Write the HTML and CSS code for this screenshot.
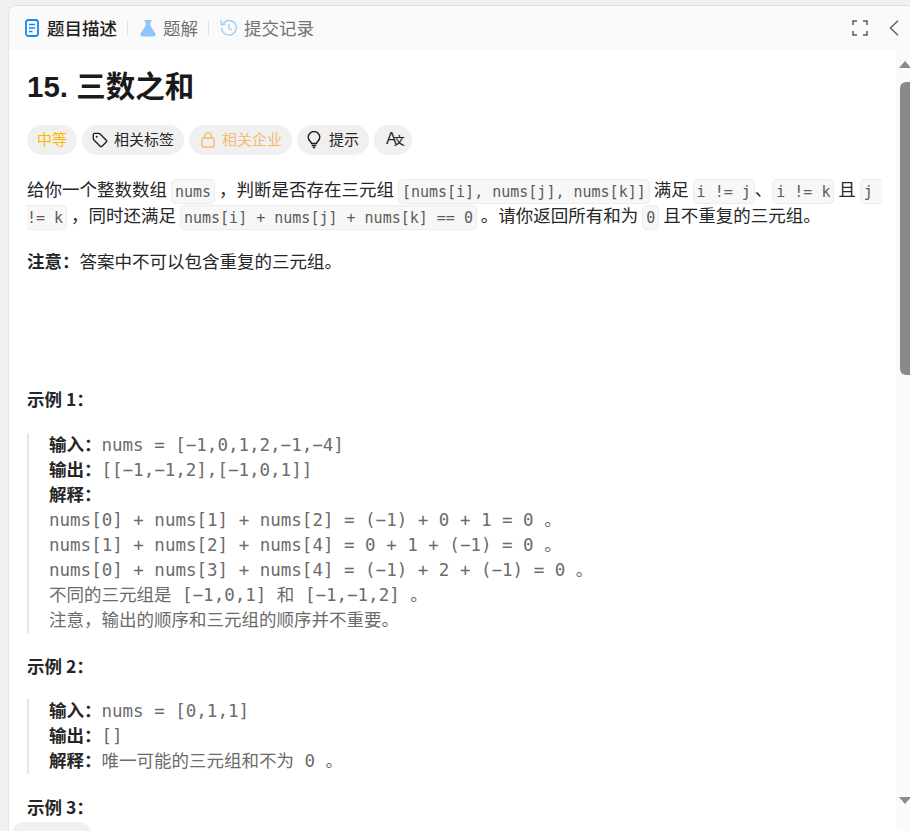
FILE: index.html
```html
<!DOCTYPE html>
<html lang="zh-CN">
<head>
<meta charset="utf-8">
<title>15. 三数之和</title>
<link rel="stylesheet" href="styles.css">
</head>
<body>
<div class="panel">
  <header class="tabs">
    <div class="tab active">
      <svg class="tab-icon" viewBox="0 0 14 18" width="14" height="18"><rect x="1" y="1" width="12" height="16" rx="2.5" fill="none" stroke="#1a86f5" stroke-width="1.8"/><path d="M4 5.500h6M4 9h6M4 12.500h3.500" stroke="#1a86f5" stroke-width="1.600" fill="none"/></svg>
      <span>题目描述</span>
    </div>
    <i class="sep"></i>
    <div class="tab">
      <svg class="tab-icon" viewBox="0 0 18 18" width="18" height="18"><path d="M5.500 1h7v1.400h-1v4.400l4.800 7.600c.8 1.300-.1 3-1.700 3H3.400c-1.600 0-2.500-1.700-1.700-3l4.800-7.600V2.400h-1z" fill="#8fc6fa"/></svg>
      <span>题解</span>
    </div>
    <i class="sep"></i>
    <div class="tab">
      <svg class="tab-icon" viewBox="0 0 18 18" width="18" height="18"><path d="M3 4.600A7.300 7.300 0 1 1 1.700 9" fill="none" stroke="#a6d0f8" stroke-width="1.500"/><path d="M.8 1.200l.6 4.600 4.400-.8" fill="none" stroke="#a6d0f8" stroke-width="1.500"/><path d="M9 5v4.600l3 1.600" fill="none" stroke="#a6d0f8" stroke-width="1.500"/></svg>
      <span>提交记录</span>
    </div>
    <div class="tab-actions">
      <svg viewBox="0 0 16 16" width="16" height="16"><path d="M1 5V1h4M11 1h4v4M15 11v4h-4M5 15H1v-4" fill="none" stroke="#5c5c5c" stroke-width="1.500"/></svg>
      <svg viewBox="0 0 10 16" width="10" height="16"><path d="M9 .8L1.400 8 9 15.200" fill="none" stroke="#5c5c5c" stroke-width="1.400"/></svg>
    </div>
  </header>
  <div class="body">
    <main class="content">
      <h1>15. 三数之和</h1>
      <div class="pills">
        <span class="pill medium">中等</span>
        <span class="pill"><svg viewBox="0 0 16 16" width="16" height="16"><path d="M1.300 2.600c0-.7.6-1.300 1.300-1.300h4.200c.4 0 .7.1 1 .4l6.500 6.500c.5.5.5 1.300 0 1.800l-4.300 4.300c-.5.5-1.300.5-1.800 0L1.700 7.800c-.3-.3-.4-.6-.4-1z" fill="none" stroke="#1a1a1a" stroke-width="1.300"/><circle cx="4.700" cy="4.700" r="1" fill="#1a1a1a"/></svg><span>相关标签</span></span>
        <span class="pill locked"><svg viewBox="0 0 14 16" width="14" height="16"><rect x="1" y="6" width="12" height="9" rx="2" fill="none" stroke="#f3bd6b" stroke-width="1.400"/><path d="M3.800 6V3.800a3.200 3.200 0 0 1 6.400 0V6" fill="none" stroke="#f3bd6b" stroke-width="1.400"/></svg><span>相关企业</span></span>
        <span class="pill hint"><svg viewBox="0 0 14 18" width="14" height="18"><path d="M4.600 12.500C4.400 10.800 1.200 9.500 1.200 6.300a5.800 5.800 0 0 1 11.600 0c0 3.200-3.200 4.500-3.400 6.200z" fill="none" stroke="#1a1a1a" stroke-width="1.400"/><path d="M4.800 14.500h4.400M5.800 16.500h2.400" stroke="#1a1a1a" stroke-width="1.500"/></svg><span>提示</span></span>
        <span class="pill ax"><span class="ax-a">A</span><span class="ax-x">文</span></span>
      </div>
      <p class="para">给你一个整数数组 <code>nums</code> ，判断是否存在三元组 <code>[nums[i], nums[j], nums[k]]</code> 满足 <code>i != j</code>、<code>i != k</code> 且 <code>j != k</code> ，同时还满足 <code>nums[i] + nums[j] + nums[k] == 0</code> 。请你返回所有和为 <code>0</code> 且不重复的三元组。</p>
      <p class="para note"><strong>注意：</strong>答案中不可以包含重复的三元组。</p>
      <p class="example-title first">示例 1：</p>
      <div class="example">
        <div><b>输入：</b>nums = [−1,0,1,2,−1,−4]</div>
        <div><b>输出：</b>[[−1,−1,2],[−1,0,1]]</div>
        <div><b>解释：</b></div>
        <div>nums[0] + nums[1] + nums[2] = (−1) + 0 + 1 = 0 。</div>
        <div>nums[1] + nums[2] + nums[4] = 0 + 1 + (−1) = 0 。</div>
        <div>nums[0] + nums[3] + nums[4] = (−1) + 2 + (−1) = 0 。</div>
        <div>不同的三元组是 [−1,0,1] 和 [−1,−1,2] 。</div>
        <div>注意，输出的顺序和三元组的顺序并不重要。</div>
      </div>
      <p class="example-title">示例 2：</p>
      <div class="example">
        <div><b>输入：</b>nums = [0,1,1]</div>
        <div><b>输出：</b>[]</div>
        <div><b>解释：</b>唯一可能的三元组和不为 0 。</div>
      </div>
      <p class="example-title">示例 3：</p>
    </main>
    <aside class="scrollbar">
      <i class="arrow up"></i>
      <i class="thumb"></i>
      <i class="arrow down"></i>
    </aside>
  </div>
  <div class="float-bar"></div>
</div>
</body>
</html>
```
FILE: styles.css
```css
html, body {
  margin: 0;
  height: 100%;
  overflow: hidden;
}
body {
  background: #f0f0f0;
  font-family: "Noto Sans CJK SC", "Noto Sans", sans-serif;
  color: #262626;
  padding: 5px 0 0 8px;
  box-sizing: border-box;
}
.panel {
  position: relative;
  height: 826px;
  width: 910px;
  background: #fff;
  border-top: 1px solid #dedede;
  border-left: 1px solid #e4e4e4;
  border-radius: 9px 0 0 0;
  display: flex;
  flex-direction: column;
  overflow: hidden;
}
.tabs {
  flex: none;
  height: 44px;
  background: #fafafa;
  display: flex;
  align-items: center;
  padding-left: 16px;
  width: 901px;
  box-sizing: border-box;
}
.tab {
  display: flex;
  align-items: center;
  gap: 6px;
  font-size: 17.5px;
  line-height: 24px;
  color: #737373;
}
.tab.active {
  color: #1f1f1f;
  font-weight: 500;
  gap: 8px;
}
.tab-icon { flex: none; }
.sep {
  width: 1px;
  height: 16px;
  background: #e2e2e2;
  margin: 0 11px 0 10px;
}
.tab-actions {
  margin-left: auto;
  margin-right: 11px;
  display: flex;
  align-items: center;
  gap: 21px;
}
.body {
  flex: 1;
  min-height: 0;
  display: flex;
  width: 901px;
}
.content {
  width: 887px;
  box-sizing: border-box;
  padding: 0 13px 0 18px;
  flex: none;
  overflow: hidden;
}
h1 {
  margin: 15px 0 0;
  font-size: 29.5px;
  line-height: 44px;
  font-weight: 700;
  color: #1a1a1a;
  font-family: "Liberation Sans", "Noto Sans CJK SC", sans-serif;
}
.pills {
  display: flex;
  gap: 5px;
  margin-top: 16px;
}
.pill {
  height: 30px;
  border-radius: 15px;
  background: #f0f0f0;
  display: flex;
  align-items: center;
  gap: 6px;
  padding: 0 10px 2px;
  box-sizing: border-box;
  font-size: 15px;
  line-height: 20px;
  color: #262626;
}
.pill svg { margin-top: 2px; }
.medium { color: #ffb800; }
.locked { color: #f0bc6f; padding: 0 10px 2px 12px; gap: 7px; }
.hint { gap: 8px; }
.ax {
  padding: 0 7px 2px 12px;
  gap: 0;
  font-family: "Liberation Sans", "Noto Sans CJK SC", sans-serif;
}
.ax-a { font-size: 16px; }
.ax-x { font-size: 11px; margin: 3px 0 0 -3px; font-weight: 500; }
.para {
  margin: 0;
  font-size: 17.5px;
  line-height: 26px;
  color: #262626;
}
.pills + .para { margin-top: 21px; }
code {
  font-family: "DejaVu Sans Mono", monospace;
  font-size: 15px;
  line-height: 1;
  color: #5c5c5c;
  background: #f7f7f7;
  border: 1px solid #ececec;
  border-radius: 5px;
  padding: 2.5px 3px;
  white-space: pre-wrap;
}
.note { margin-top: 20px; }
strong, b {
  font-weight: 700;
  color: #262626;
}
.example-title {
  margin: 20px 0 0;
  font-size: 17.5px;
  line-height: 26px;
  font-weight: 700;
  color: #262626;
}
.example-title.first { margin-top: 112px; }
.example {
  margin-top: 20.5px;
  border-left: 2px solid #e6e6e6;
  padding-left: 20px;
  font-family: "DejaVu Sans Mono", "Noto Sans CJK SC", monospace;
  font-size: 17.5px;
  color: #6b6b6b;
}
.example div {
  height: 25px;
  line-height: 25px;
}
.example b {
  font-family: "Noto Sans CJK SC", sans-serif;
  line-height: 1;
}
.scrollbar {
  flex: none;
  width: 14px;
  background: #fafafa;
  display: flex;
  flex-direction: column;
  align-items: flex-start;
  padding-left: 3px;
  box-sizing: border-box;
}
.arrow {
  width: 0;
  height: 0;
  border-left: 6px solid transparent;
  border-right: 6px solid transparent;
}
.arrow.up {
  border-bottom: 7px solid #8a8a8a;
  margin-top: 11px;
}
.thumb {
  width: 10px;
  height: 293px;
  border-radius: 6px 0 0 6px;
  background: #8a8a8a;
  margin: 14px 0 0 1px;
}
.arrow.down {
  border-top: 7px solid #8a8a8a;
  margin-top: auto;
  margin-bottom: 28px;
}
.float-bar {
  position: absolute;
  left: 3px;
  bottom: -20px;
  width: 79px;
  height: 30px;
  background: #f0f0f0;
  border-radius: 12px;
}
```
